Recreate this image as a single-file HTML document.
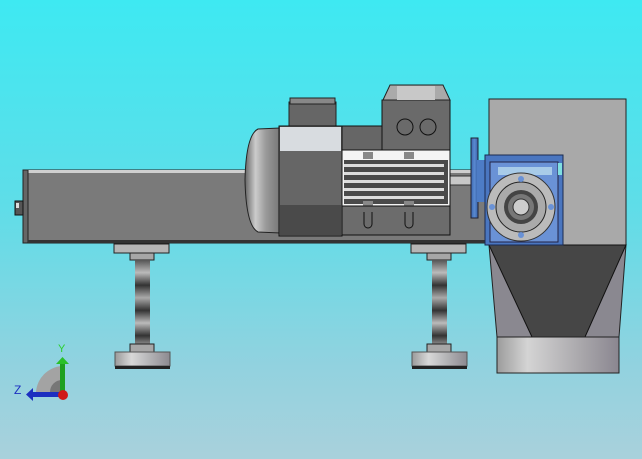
<!DOCTYPE html>
<html><head><meta charset="utf-8"><style>
html,body{margin:0;padding:0}
body{width:642px;height:459px;overflow:hidden;background:linear-gradient(#3ee9f2 0%,#5fdde8 45%,#92d2df 80%,#a9d1dc 100%)}
svg{display:block}
</style></head><body>
<svg width="642" height="459" viewBox="0 0 642 459" xmlns="http://www.w3.org/2000/svg">
<defs>
<linearGradient id="rod" x1="0" y1="0" x2="0" y2="1">
<stop offset="0" stop-color="#555"/><stop offset=".15" stop-color="#bbb"/><stop offset=".3" stop-color="#333"/><stop offset=".45" stop-color="#aaa"/><stop offset=".6" stop-color="#333"/><stop offset=".75" stop-color="#bbb"/><stop offset=".9" stop-color="#333"/><stop offset="1" stop-color="#888"/></linearGradient>
<linearGradient id="foot" x1="0" y1="0" x2="1" y2="0"><stop offset="0" stop-color="#9a9a9a"/><stop offset=".3" stop-color="#d8d8d8"/><stop offset="1" stop-color="#8c8a90"/></linearGradient>
<linearGradient id="cyl" x1="0" y1="0" x2="1" y2="0"><stop offset="0" stop-color="#9c9c9c"/><stop offset=".25" stop-color="#d4d4d4"/><stop offset=".7" stop-color="#a8a6aa"/><stop offset="1" stop-color="#8a8690"/></linearGradient>
<linearGradient id="fan" x1="0" y1="0" x2="1" y2="0"><stop offset="0" stop-color="#666"/><stop offset=".3" stop-color="#ccc"/><stop offset=".6" stop-color="#999"/><stop offset="1" stop-color="#777"/></linearGradient>
<linearGradient id="blue" x1="0" y1="0" x2="1" y2="0"><stop offset="0" stop-color="#3a66b0"/><stop offset=".5" stop-color="#5a8ad0"/><stop offset="1" stop-color="#3760a8"/></linearGradient>
</defs>
<rect x="489" y="99" width="137" height="146" fill="#a9a9a9" stroke="#222" stroke-width="1"/>
<path d="M489 245 L626 245 L619 337 L497 337 Z" fill="#8a8890" stroke="#222"/>
<path d="M489 245 L626 245 L585 337 L532 337 Z" fill="#464646" stroke="#111"/>
<rect x="497" y="337" width="122" height="36" fill="url(#cyl)" stroke="#222"/>
<rect x="23" y="170" width="466" height="73" fill="#7a7a7a" stroke="#222"/>
<rect x="28" y="170" width="461" height="3" fill="#cfcfcf"/>
<rect x="23" y="170" width="5" height="73" fill="#666" stroke="#222"/>
<rect x="28" y="240" width="461" height="3" fill="#333"/>
<rect x="15" y="201" width="8" height="14" fill="#555" stroke="#111"/>
<rect x="16" y="203" width="3" height="5" fill="#ddd"/>
<g id="leg">
<rect x="114" y="244" width="55" height="9" fill="#b6b6b6" stroke="#222"/>
<rect x="130" y="253" width="24" height="7" fill="#a7a7a7" stroke="#222"/>
<rect x="135" y="260" width="15" height="84" fill="url(#rod)"/>
<rect x="130" y="344" width="24" height="8" fill="#a7a7a7" stroke="#222"/>
<rect x="115" y="352" width="55" height="14" fill="url(#foot)" stroke="#555"/>
<rect x="115" y="366" width="55" height="3" fill="#222"/>
</g>
<use href="#leg" transform="translate(297,0)"/>
<rect x="448" y="176" width="28" height="9" fill="#c8c8c8" stroke="#333"/>
<rect x="471" y="138" width="7" height="80" fill="url(#blue)" stroke="#223"/>
<rect x="477" y="160" width="10" height="42" fill="#4d7cc6"/>
<rect x="485" y="155" width="78" height="90" fill="#4a76c0" stroke="#1a2a50"/>
<rect x="490" y="162" width="68" height="80" fill="#6a92d6" stroke="#224"/>
<rect x="498" y="167" width="54" height="8" fill="#a8cbe8"/>
<rect x="558" y="163" width="4" height="12" fill="#80e0e0"/>
<circle cx="521" cy="207" r="34" fill="#bbb" stroke="#333"/>
<circle cx="521" cy="207" r="25" fill="#aaa" stroke="#222"/>
<circle cx="521" cy="207" r="17" fill="#444"/>
<circle cx="521" cy="207" r="13" fill="#777"/>
<circle cx="521" cy="207" r="8" fill="#ccc" stroke="#333"/>
<circle cx="521" cy="179" r="3" fill="#6a92d6"/><circle cx="521" cy="235" r="3" fill="#6a92d6"/>
<circle cx="492" cy="207" r="3" fill="#6a92d6"/><circle cx="551" cy="207" r="3" fill="#6a92d6"/>
<path d="M280 128 L258 129 Q246 135 245 180 Q246 226 258 232 L280 233 Z" fill="url(#fan)" stroke="#222"/>
<rect x="289" y="102" width="47" height="24" fill="#666" stroke="#222"/>
<rect x="290" y="98" width="45" height="6" fill="#888" stroke="#222"/>
<rect x="279" y="126" width="63" height="110" fill="#666" stroke="#111"/>
<rect x="280" y="127" width="61" height="24" fill="#d8dce0"/>
<rect x="280" y="205" width="61" height="30" fill="#4a4a4a"/>
<rect x="342" y="126" width="108" height="28" fill="#666" stroke="#111"/>
<rect x="382" y="100" width="68" height="50" fill="#6a6a6a" stroke="#111"/>
<path d="M383 100 L390 85 L443 85 L450 100 Z" fill="#aaa" stroke="#222"/>
<rect x="397" y="86" width="38" height="14" fill="#c8c8c8"/>
<circle cx="405" cy="127" r="8" fill="none" stroke="#111"/>
<circle cx="428" cy="127" r="8" fill="none" stroke="#111"/>
<rect x="342" y="150" width="108" height="56" fill="#f4f4f4" stroke="#111"/>
<rect x="344" y="160" width="104" height="44" fill="#4a4a4a"/>
<g fill="#ddd"><rect x="344" y="164" width="100" height="3"/><rect x="344" y="172" width="100" height="3"/><rect x="344" y="180" width="100" height="3"/><rect x="344" y="188" width="100" height="3"/><rect x="344" y="196" width="100" height="3"/></g>
<rect x="363" y="152" width="10" height="7" fill="#888"/><rect x="404" y="152" width="10" height="7" fill="#888"/>
<rect x="363" y="201" width="10" height="7" fill="#888"/><rect x="404" y="201" width="10" height="7" fill="#888"/>
<rect x="342" y="206" width="108" height="29" fill="#6c6c6c" stroke="#111"/>
<path d="M364 212 v12 a4 4 0 0 0 8 0 v-12" fill="none" stroke="#111"/>
<path d="M405 212 v12 a4 4 0 0 0 8 0 v-12" fill="none" stroke="#111"/>
<path d="M36 392 A28 28 0 0 1 62 366 L62 392 Z" fill="#a3a3a3"/>
<path d="M50 392 A12 12 0 0 1 62 380 L62 392 Z" fill="#777"/>
<rect x="60" y="363" width="5" height="29" fill="#1fa020"/>
<path d="M56 364 L62.5 357 L69 364 Z" fill="#2ac02a"/>
<rect x="32" y="392" width="30" height="5" fill="#1c2fc0"/>
<path d="M33 388 L26 394.5 L33 401 Z" fill="#1c2fc0"/>
<circle cx="63" cy="395" r="5" fill="#d01818"/>
<text x="58" y="352" font-family="Liberation Sans, sans-serif" font-size="11" fill="#2ad02a">Y</text>
<text x="14" y="394" font-family="Liberation Sans, sans-serif" font-size="12" fill="#1c2fc0">Z</text>
</svg>
</body></html>
